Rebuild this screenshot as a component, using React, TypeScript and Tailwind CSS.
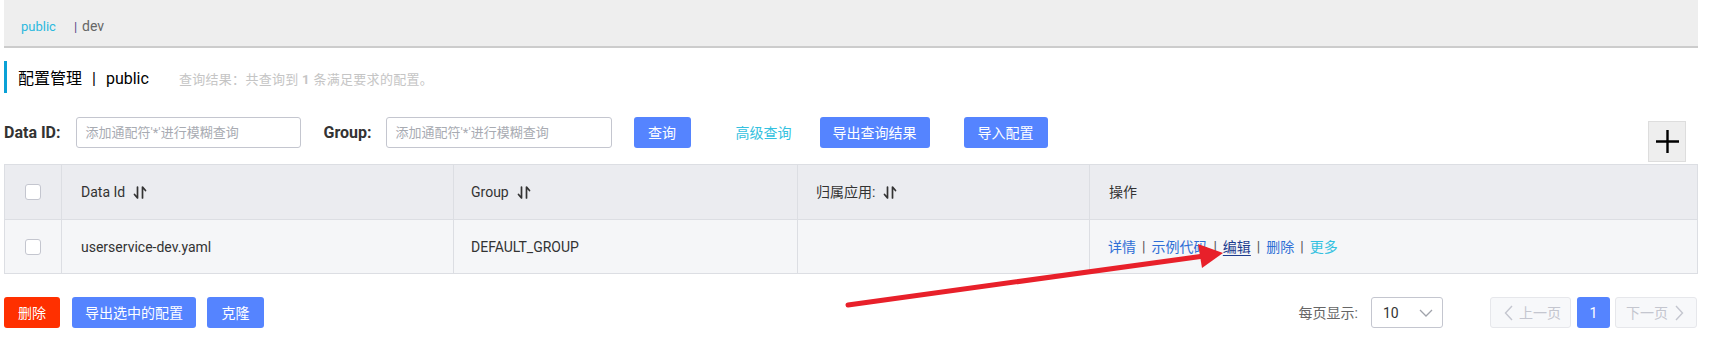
import React from "react";

const SortIcon = () => (
  <svg width="14" height="13" viewBox="0 0 14 13" fill="none" stroke="#333" strokeWidth="1.7" strokeLinecap="round" strokeLinejoin="round">
    <path d="M4.5 1V12L1.5 8.5" />
    <path d="M9.5 12V1L12.5 4.5" />
  </svg>
);

const ChevronDown = () => (
  <svg width="14" height="8" viewBox="0 0 14 8" fill="none" stroke="#a0a3ab" strokeWidth="1.3">
    <path d="M1 1L7 7L13 1" />
  </svg>
);

const ChevronLeft = () => (
  <svg width="9" height="16" viewBox="0 0 9 16" fill="none" stroke="#c4c6cf" strokeWidth="1.4">
    <path d="M8 1L1.5 8L8 15" />
  </svg>
);

const ChevronRight = () => (
  <svg width="9" height="16" viewBox="0 0 9 16" fill="none" stroke="#c4c6cf" strokeWidth="1.4">
    <path d="M1 1L7.5 8L1 15" />
  </svg>
);

const Checkbox = () => (
  <div className="w-[16px] h-[16px] bg-white border border-[#c4c6cf] rounded-[3px]" />
);

const Sep = () => <span className="mx-[6px] text-[#555]">|</span>;

export default function App() {
  return (
    <div className="relative w-[1709px] h-[339px] bg-white overflow-hidden font-['Roboto','Noto_Sans_CJK_SC',sans-serif] text-[#333]">
      <div className="ml-[4px] w-[1694px]">
        {/* top bar */}
        <div className="h-[48px] bg-[#eeeeee] border-b-2 border-[#cccccc] flex items-center pt-[6px] pl-[17px] text-[13px] leading-none">
          <span className="text-[#2bb9de]">public</span>
          <span className="ml-[18px] text-[#5a4a8a]">|</span>
          <span className="ml-[5px] text-[14px] text-[#666]">dev</span>
        </div>

        {/* title */}
        <div className="mt-[13px] h-[32px] border-l-[3px] border-[#0aa1d6] flex items-baseline pt-[10px] pl-[11px] leading-none">
          <span className="text-[16px] text-[#000]">配置管理</span>
          <span className="text-[16px] text-[#000] mx-[10px]">|</span>
          <span className="text-[16px] text-[#000]">public</span>
          <span className="ml-[30px] text-[13px] text-[#c5c5c5] tracking-[0.3px]">
            查询结果：共查询到 <b className="font-bold">1</b> 条满足要求的配置。
          </span>
        </div>

        {/* search row */}
        <div className="mt-[24px] flex items-start justify-between">
          <div className="flex items-center h-[31px] leading-none">
            <span className="text-[16px] font-bold text-[#333]">Data ID:</span>
            <div className="ml-[15px] w-[225px] h-[31px] border border-[#c4c6cf] rounded-[3px] flex items-center pl-[9px] text-[13px] text-[#a8abb2]">
              添加通配符'*'进行模糊查询
            </div>
            <span className="ml-[23px] text-[16px] font-bold text-[#333]">Group:</span>
            <div className="ml-[14px] w-[226px] h-[31px] border border-[#c4c6cf] rounded-[3px] flex items-center pl-[9px] text-[13px] text-[#a8abb2]">
              添加通配符'*'进行模糊查询
            </div>
            <div className="ml-[22px] w-[57px] h-[31px] rounded-[3px] bg-[#5584ff] text-white text-[14px] flex items-center justify-center">查询</div>
            <span className="ml-[45px] text-[14px] text-[#33c1e0]">高级查询</span>
            <div className="ml-[28px] w-[110px] h-[31px] rounded-[3px] bg-[#5584ff] text-white text-[14px] flex items-center justify-center">导出查询结果</div>
            <div className="ml-[34px] w-[84px] h-[31px] rounded-[3px] bg-[#5584ff] text-white text-[14px] flex items-center justify-center">导入配置</div>
          </div>
          <div className="mt-[4px] mr-[12px] w-[38px] h-[41px] bg-[#eeeeee] border border-[#dddddd] flex items-center justify-center">
            <svg width="23" height="23" viewBox="0 0 23 23" fill="none" stroke="#000" strokeWidth="2.4">
              <path d="M11.5 0V23M0 11.5H23" />
            </svg>
          </div>
        </div>

        {/* table */}
        <div className="mt-[2px] border-t border-l border-r border-[#dcdee3] text-[14px] leading-none">
          <div className="h-[55px] flex bg-[#ebecf0] border-b border-[#dcdee3]">
            <div className="w-[57px] border-r border-[#dcdee3] flex items-center justify-center pr-[1px]">
              <Checkbox />
            </div>
            <div className="w-[392px] border-r border-[#dcdee3] flex items-center pl-[19px]">
              <span>Data Id</span>
              <span className="ml-[8px]"><SortIcon /></span>
            </div>
            <div className="w-[344px] border-r border-[#dcdee3] flex items-center pl-[17px]">
              <span>Group</span>
              <span className="ml-[8px]"><SortIcon /></span>
            </div>
            <div className="w-[292px] border-r border-[#dcdee3] flex items-center pl-[18px]">
              <span>归属应用:</span>
              <span className="ml-[8px]"><SortIcon /></span>
            </div>
            <div className="flex-1 flex items-center pl-[19px]">
              <span>操作</span>
            </div>
          </div>
          <div className="h-[54px] flex bg-[#f5f6f8] border-b border-[#dcdee3]">
            <div className="w-[57px] border-r border-[#dcdee3] flex items-center justify-center pr-[1px]">
              <Checkbox />
            </div>
            <div className="w-[392px] border-r border-[#dcdee3] flex items-center pl-[19px]">
              userservice-dev.yaml
            </div>
            <div className="w-[344px] border-r border-[#dcdee3] flex items-center pl-[17px]">
              DEFAULT_GROUP
            </div>
            <div className="w-[292px] border-r border-[#dcdee3]" />
            <div className="flex-1 flex items-center pl-[18px]">
              <span className="text-[#2f6fd6]">详情</span>
              <Sep />
              <span className="text-[#2f6fd6]">示例代码</span>
              <Sep />
              <span className="text-[#1d3d8f] underline underline-offset-[3px]">编辑</span>
              <Sep />
              <span className="text-[#2f6fd6]">删除</span>
              <Sep />
              <span className="text-[#33c1e0]">更多</span>
            </div>
          </div>
        </div>

        {/* bottom bar */}
        <div className="mt-[23px] flex items-center justify-between text-[14px] leading-none">
          <div className="flex items-center">
            <div className="w-[56px] h-[31px] rounded-[3px] bg-[#ff3000] text-white flex items-center justify-center">删除</div>
            <div className="ml-[12px] w-[124px] h-[31px] rounded-[3px] bg-[#5584ff] text-white flex items-center justify-center">导出选中的配置</div>
            <div className="ml-[11px] w-[57px] h-[31px] rounded-[3px] bg-[#5584ff] text-white flex items-center justify-center">克隆</div>
          </div>
          <div className="flex items-center mr-[1px]">
            <span className="text-[#666]">每页显示:</span>
            <div className="ml-[13px] w-[72px] h-[31px] border border-[#c4c6cf] rounded-[3px] flex items-center justify-between pl-[11px] pr-[9px]">
              <span className="text-[#333]">10</span>
              <ChevronDown />
            </div>
            <div className="ml-[47px] w-[81px] h-[31px] border border-[#e6e7eb] bg-[#f7f8fa] rounded-[3px] flex items-center pl-[13px] text-[#c4c6cf]">
              <ChevronLeft />
              <span className="ml-[6px]">上一页</span>
            </div>
            <div className="ml-[6px] w-[33px] h-[31px] rounded-[3px] bg-[#5584ff] text-white flex items-center justify-center">1</div>
            <div className="ml-[5px] w-[82px] h-[31px] border border-[#e6e7eb] bg-[#f7f8fa] rounded-[3px] flex items-center pl-[10px] text-[#c4c6cf]">
              <span>下一页</span>
              <span className="ml-[7px]"><ChevronRight /></span>
            </div>
          </div>
        </div>
      </div>

      {/* red annotation arrow */}
      <svg className="absolute left-0 top-0 pointer-events-none" width="1709" height="339" viewBox="0 0 1709 339">
        <line x1="848" y1="305" x2="1204" y2="256" stroke="#e8202a" strokeWidth="5" strokeLinecap="round" />
        <polygon points="1223,253 1198,244 1202,268" fill="#e8202a" />
      </svg>
    </div>
  );
}
